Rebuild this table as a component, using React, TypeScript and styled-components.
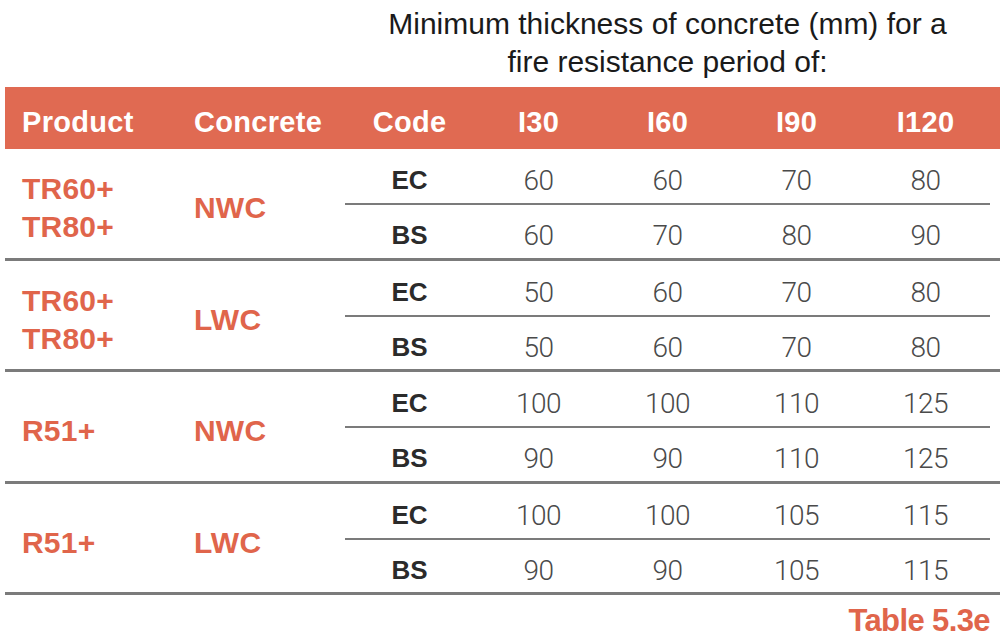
import styled, { createGlobalStyle } from 'styled-components'

const ORANGE = '#e06a52'
const RED_TEXT = '#e0654b'
const RULE = '#7b7b7b'

const GlobalStyle = createGlobalStyle`
    html, body {
        margin: 0;
        padding: 0;
        background: #ffffff;
    }
    body {
        font-family: 'Liberation Sans', Arial, sans-serif;
    }
`

const Page = styled.div`
    width: 1000px;
    height: 641px;
    padding-left: 5px;
    box-sizing: border-box;
    overflow: hidden;
`

const Caption = styled.div`
    margin-left: 340px;
    width: 645px;
    height: 87px;
    box-sizing: border-box;
    padding-top: 5px;
    text-align: center;
    font-size: 30px;
    line-height: 38px;
    color: #1a1a1a;
`

const Columns = `
    display: grid;
    grid-template-columns: 188px 152px repeat(5, 129px);
`

const HeaderRow = styled.div`
    ${Columns}
    height: 62px;
    background-color: ${ORANGE};
    color: #ffffff;
    font-weight: bold;
    font-size: 29px;
    letter-spacing: 0.3px;
`

const HeadCell = styled.div<{ $left?: boolean }>`
    display: flex;
    align-items: center;
    justify-content: ${(p) => (p.$left ? 'flex-start' : 'center')};
    padding-left: ${(p) => (p.$left ? '17px' : '0')};
    padding-top: 9px;
    box-sizing: border-box;
`

const Group = styled.div`
    display: grid;
    grid-template-columns: 188px 152px 645px;
    border-bottom: 3px solid ${RULE};
`

const LabelCell = styled.div<{ $pad: number }>`
    display: flex;
    align-items: center;
    padding-left: ${(p) => p.$pad}px;
    padding-top: 10px;
    box-sizing: border-box;
    color: ${RED_TEXT};
    font-weight: bold;
    font-size: 30px;
    line-height: 38px;
    letter-spacing: 0.2px;
`

const SubRows = styled.div`
    display: flex;
    flex-direction: column;
`

const SubRow = styled.div<{ $first?: boolean }>`
    display: grid;
    grid-template-columns: repeat(5, 129px);
    height: ${(p) => (p.$first ? '54px' : '52.5px')};
    border-bottom: ${(p) => (p.$first ? `2px solid ${RULE}` : 'none')};
`

const CodeCell = styled.div`
    display: flex;
    align-items: center;
    justify-content: center;
    padding-top: 9px;
    box-sizing: border-box;
    color: #2b2b2b;
    font-weight: bold;
    font-size: 26px;
`

const ValueCell = styled.div`
    display: flex;
    align-items: center;
    justify-content: center;
    padding-top: 9px;
    box-sizing: border-box;
    color: #4a4a4a;
    font-family: Roboto, 'Liberation Sans', sans-serif;
    font-weight: 300;
    font-size: 28px;
    letter-spacing: -0.6px;
`

const TableRef = styled.div`
    width: 985px;
    text-align: right;
    margin-top: 8px;
    color: ${RED_TEXT};
    font-weight: bold;
    font-size: 31px;
    letter-spacing: -0.6px;
`

type Row = { code: string; values: number[] }
type Block = { product: string[]; concrete: string; rows: Row[] }

const blocks: Block[] = [
    {
        product: ['TR60+', 'TR80+'],
        concrete: 'NWC',
        rows: [
            { code: 'EC', values: [60, 60, 70, 80] },
            { code: 'BS', values: [60, 70, 80, 90] },
        ],
    },
    {
        product: ['TR60+', 'TR80+'],
        concrete: 'LWC',
        rows: [
            { code: 'EC', values: [50, 60, 70, 80] },
            { code: 'BS', values: [50, 60, 70, 80] },
        ],
    },
    {
        product: ['R51+'],
        concrete: 'NWC',
        rows: [
            { code: 'EC', values: [100, 100, 110, 125] },
            { code: 'BS', values: [90, 90, 110, 125] },
        ],
    },
    {
        product: ['R51+'],
        concrete: 'LWC',
        rows: [
            { code: 'EC', values: [100, 100, 105, 115] },
            { code: 'BS', values: [90, 90, 105, 115] },
        ],
    },
]

const periods = ['I30', 'I60', 'I90', 'I120']

export default function App() {
    return (
        <>
            <GlobalStyle />
            <Page>
                <Caption>
                    Minimum thickness of concrete (mm) for a
                    <br />
                    fire resistance period of:
                </Caption>
                <HeaderRow>
                    <HeadCell $left>Product</HeadCell>
                    <HeadCell $left style={{ paddingLeft: 1 }}>
                        Concrete
                    </HeadCell>
                    <HeadCell>Code</HeadCell>
                    {periods.map((p) => (
                        <HeadCell key={p}>{p}</HeadCell>
                    ))}
                </HeaderRow>
                {blocks.map((b, i) => (
                    <Group key={i}>
                        <LabelCell $pad={17}>
                            <div>
                                {b.product.map((line) => (
                                    <div key={line}>{line}</div>
                                ))}
                            </div>
                        </LabelCell>
                        <LabelCell $pad={1}>{b.concrete}</LabelCell>
                        <SubRows>
                            {b.rows.map((r, j) => (
                                <SubRow key={r.code} $first={j === 0}>
                                    <CodeCell>{r.code}</CodeCell>
                                    {r.values.map((v, k) => (
                                        <ValueCell key={k}>{v}</ValueCell>
                                    ))}
                                </SubRow>
                            ))}
                        </SubRows>
                    </Group>
                ))}
                <TableRef>Table 5.3e</TableRef>
            </Page>
        </>
    )
}
